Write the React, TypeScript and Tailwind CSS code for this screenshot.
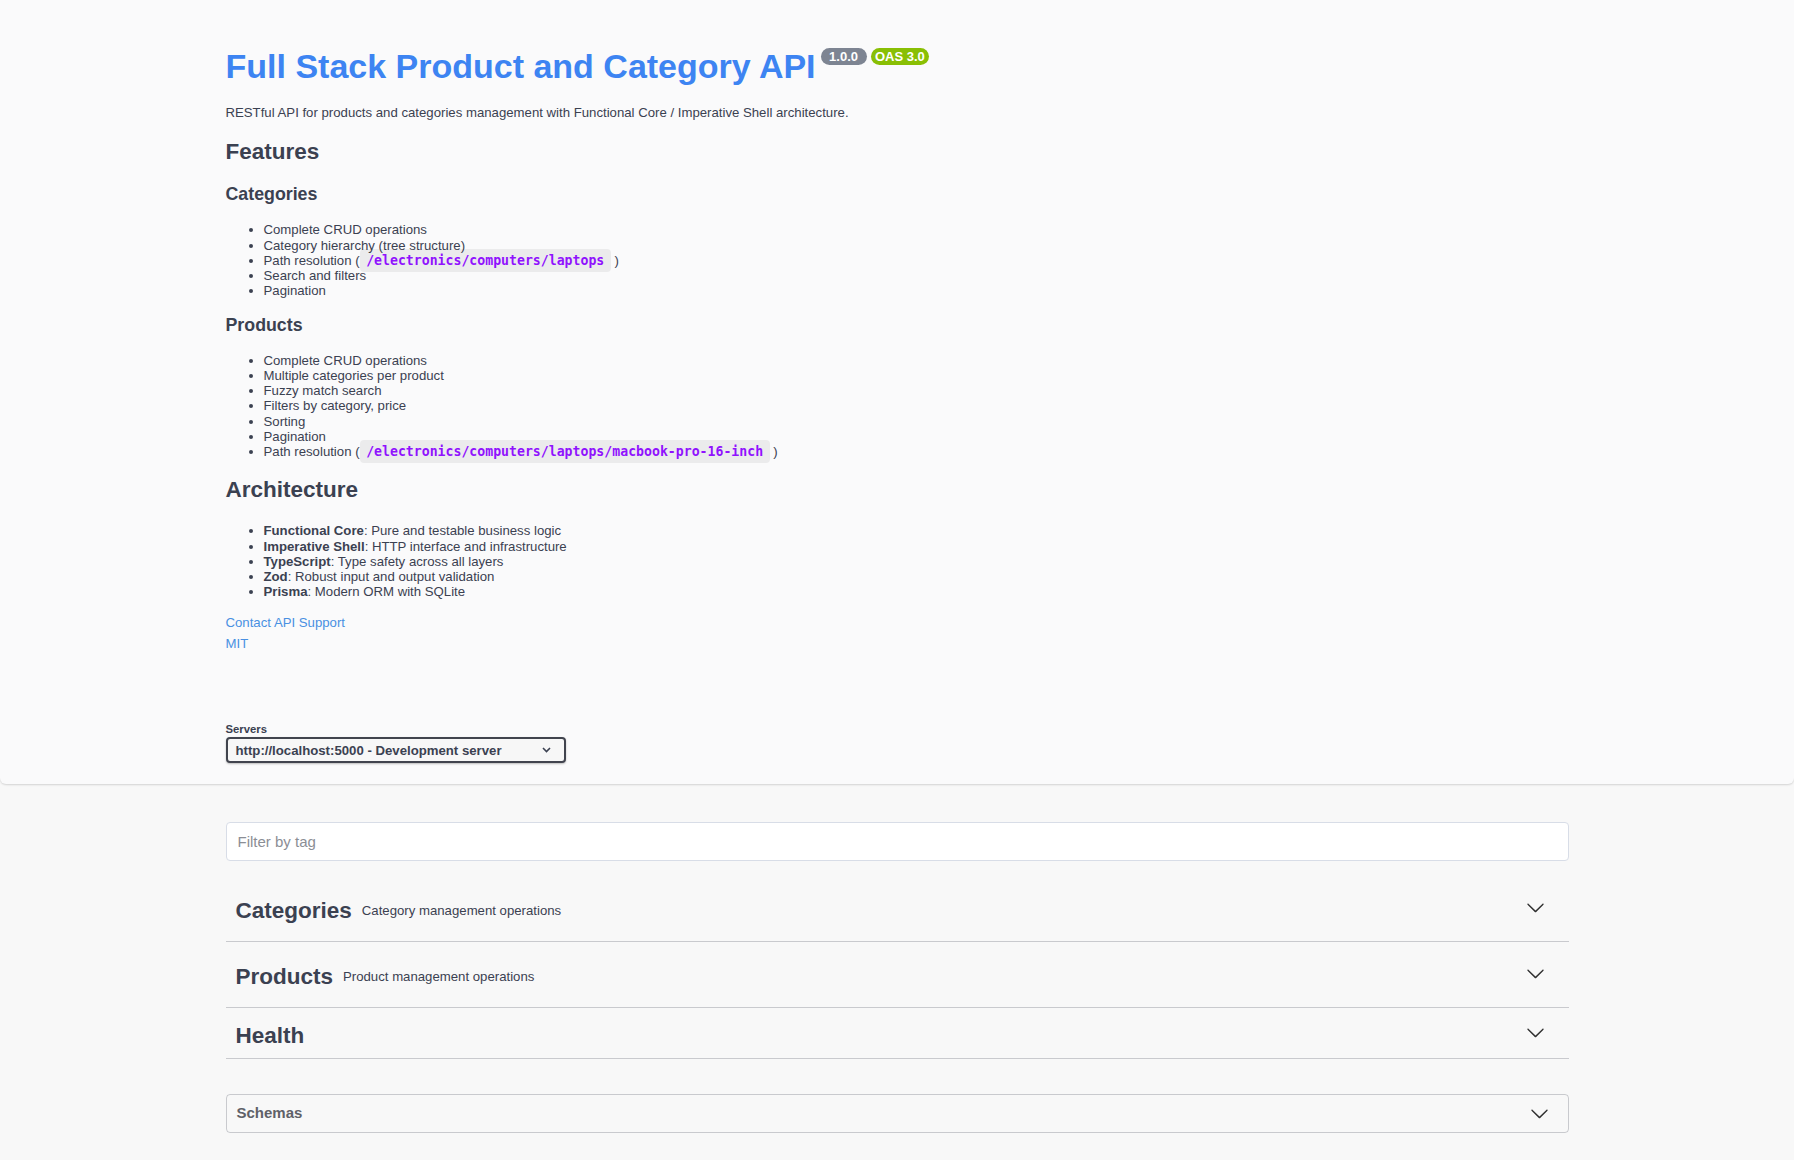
import React from "react";

const sans = { fontFamily: '"Liberation Sans", Arial, sans-serif' };

function Code({ children }: { children: React.ReactNode }) {
  return (
    <code className="rounded-[4px] bg-[rgba(0,0,0,0.06)] px-[6.6px] py-[4px] text-[13.2px] font-bold text-[#9012fe] [font-family:'DejaVu_Sans_Mono',monospace]">
      {children}
    </code>
  );
}

function Chevron({ size = 19 }: { size?: number }) {
  return (
    <svg width={size} height={size} viewBox="0 0 20 20" className="shrink-0">
      <path
        fill="#303030"
        d="M17.418 6.109c.272-.268.709-.268.979 0s.271.701 0 .969l-7.908 7.83c-.27.268-.707.268-.979 0l-7.908-7.83c-.27-.268-.27-.701 0-.969.271-.268.709-.268.979 0L10 13.25l7.418-7.141z"
      />
    </svg>
  );
}

const categoryItems: React.ReactNode[] = [
  "Complete CRUD operations",
  "Category hierarchy (tree structure)",
  <>Path resolution (<Code>/electronics/computers/laptops</Code> )</>,
  "Search and filters",
  "Pagination",
];

const productItems: React.ReactNode[] = [
  "Complete CRUD operations",
  "Multiple categories per product",
  "Fuzzy match search",
  "Filters by category, price",
  "Sorting",
  "Pagination",
  <>Path resolution (<Code>/electronics/computers/laptops/macbook-pro-16-inch</Code> )</>,
];

const archItems = [
  ["Functional Core", "Pure and testable business logic"],
  ["Imperative Shell", "HTTP interface and infrastructure"],
  ["TypeScript", "Type safety across all layers"],
  ["Zod", "Robust input and output validation"],
  ["Prisma", "Modern ORM with SQLite"],
];

const tags = [
  { name: "Categories", desc: "Category management operations" },
  { name: "Products", desc: "Product management operations" },
  { name: "Health", desc: "" },
];

function List({ items }: { items: React.ReactNode[] }) {
  return (
    <ul className="list-disc pl-[38px] text-[13.2px] leading-[15.2px] text-[#3b4151]">
      {items.map((it, i) => (
        <li key={i}>{it}</li>
      ))}
    </ul>
  );
}

export default function App() {
  return (
    <div className="min-h-screen bg-[#f8f8f8] text-[#3b4151]" style={sans}>
      {/* info + servers */}
      <div className="rounded-b-[6px] bg-[#fafafb] shadow-[0_1px_2px_0_rgba(0,0,0,0.15)]">
        <div className="mx-auto max-w-[1343px] pt-[46px] pb-[21px]">
          <div className="flex items-start">
            <h1 className="text-[34px] font-bold leading-[40px] text-[#3d84f2]">
              Full Stack Product and Category API
            </h1>
            <div className="ml-[5px] mt-[1.5px] flex gap-[4px]">
              <span className="h-[17px] rounded-full bg-[#7d8492] px-[8.5px] text-[13px] font-bold leading-[17px] text-white">
                1.0.0
              </span>
              <span className="h-[17px] rounded-full bg-[#89bf04] px-[4.5px] text-[13px] font-bold leading-[17px] text-white">
                OAS 3.0
              </span>
            </div>
          </div>

          <p className="mt-[18.5px] text-[13.2px] leading-[16px]">
            RESTful API for products and categories management with Functional Core / Imperative Shell architecture.
          </p>

          <h2 className="mt-[18px] text-[22.5px] font-bold leading-[26px]">Features</h2>
          <h3 className="mt-[19.5px] text-[17.8px] font-bold leading-[21px]">Categories</h3>
          <div className="mt-[17.4px]">
            <List items={categoryItems} />
          </div>
          <h3 className="mt-[16.1px] text-[17.8px] font-bold leading-[21px]">Products</h3>
          <div className="mt-[17.3px]">
            <List items={productItems} />
          </div>

          <h2 className="mt-[18px] text-[22.5px] font-bold leading-[26px]">Architecture</h2>
          <div className="mt-[20.1px]">
            <List
              items={archItems.map(([b, t]) => (
                <>
                  <strong className="font-bold">{b}</strong>: {t}
                </>
              ))}
            />
          </div>

          <div className="mt-[15.5px] text-[13.2px] leading-[16px] text-[#4990e2]">Contact API Support</div>
          <div className="mt-[5.6px] text-[13.2px] leading-[16px] text-[#4990e2]">MIT</div>

          <div className="mt-[69.5px] text-[11.3px] font-bold leading-[14px]">Servers</div>
          <div className="mt-[1.5px] flex h-[26px] w-[340px] items-center justify-between rounded-[4px] border-2 border-[#41444e] bg-[#f7f7f7] pl-[8px] pr-[13px] shadow-[0_1px_2px_0_rgba(0,0,0,0.25)]">
            <span className="text-[13.2px] font-bold">http://localhost:5000 - Development server</span>
            <svg width="9" height="6" viewBox="0 0 9 6">
              <path d="M1 1l3.5 3.5L8 1" fill="none" stroke="#3b4151" strokeWidth="1.6" />
            </svg>
          </div>
        </div>
      </div>

      {/* operations */}
      <div className="mx-auto max-w-[1343px] pt-[37.5px] pb-[28px]">
        <input
          placeholder="Filter by tag"
          className="block h-[39px] w-full rounded-[4px] border border-[#d8dde7] bg-white px-[11px] text-[15px] outline-none placeholder:text-[#8b8e95]"
        />

        <div className="mt-[20px]">
          {tags.map((t) => (
            <div
              key={t.name}
              className={`mb-[5px] flex items-center justify-between border-b border-[rgba(59,65,81,0.25)] pl-[10px] pr-[24px] ${
                t.desc ? "h-[61px]" : "h-[46px]"
              }`}
            >
              <div className="flex items-center">
                <span className="text-[22.5px] font-bold">{t.name}</span>
                {t.desc && <span className="pl-[10px] text-[13.2px]">{t.desc}</span>}
              </div>
              <div className="mb-[6px]">
                <Chevron />
              </div>
            </div>
          ))}
        </div>

        <div className="mt-[34.7px] flex h-[39px] items-center justify-between rounded-[4px] border border-[rgba(59,65,81,0.25)] pl-[10px] pr-[19px]">
          <span className="text-[15px] font-bold text-[#5f6168]">Schemas</span>
          <Chevron />
        </div>
      </div>
    </div>
  );
}
